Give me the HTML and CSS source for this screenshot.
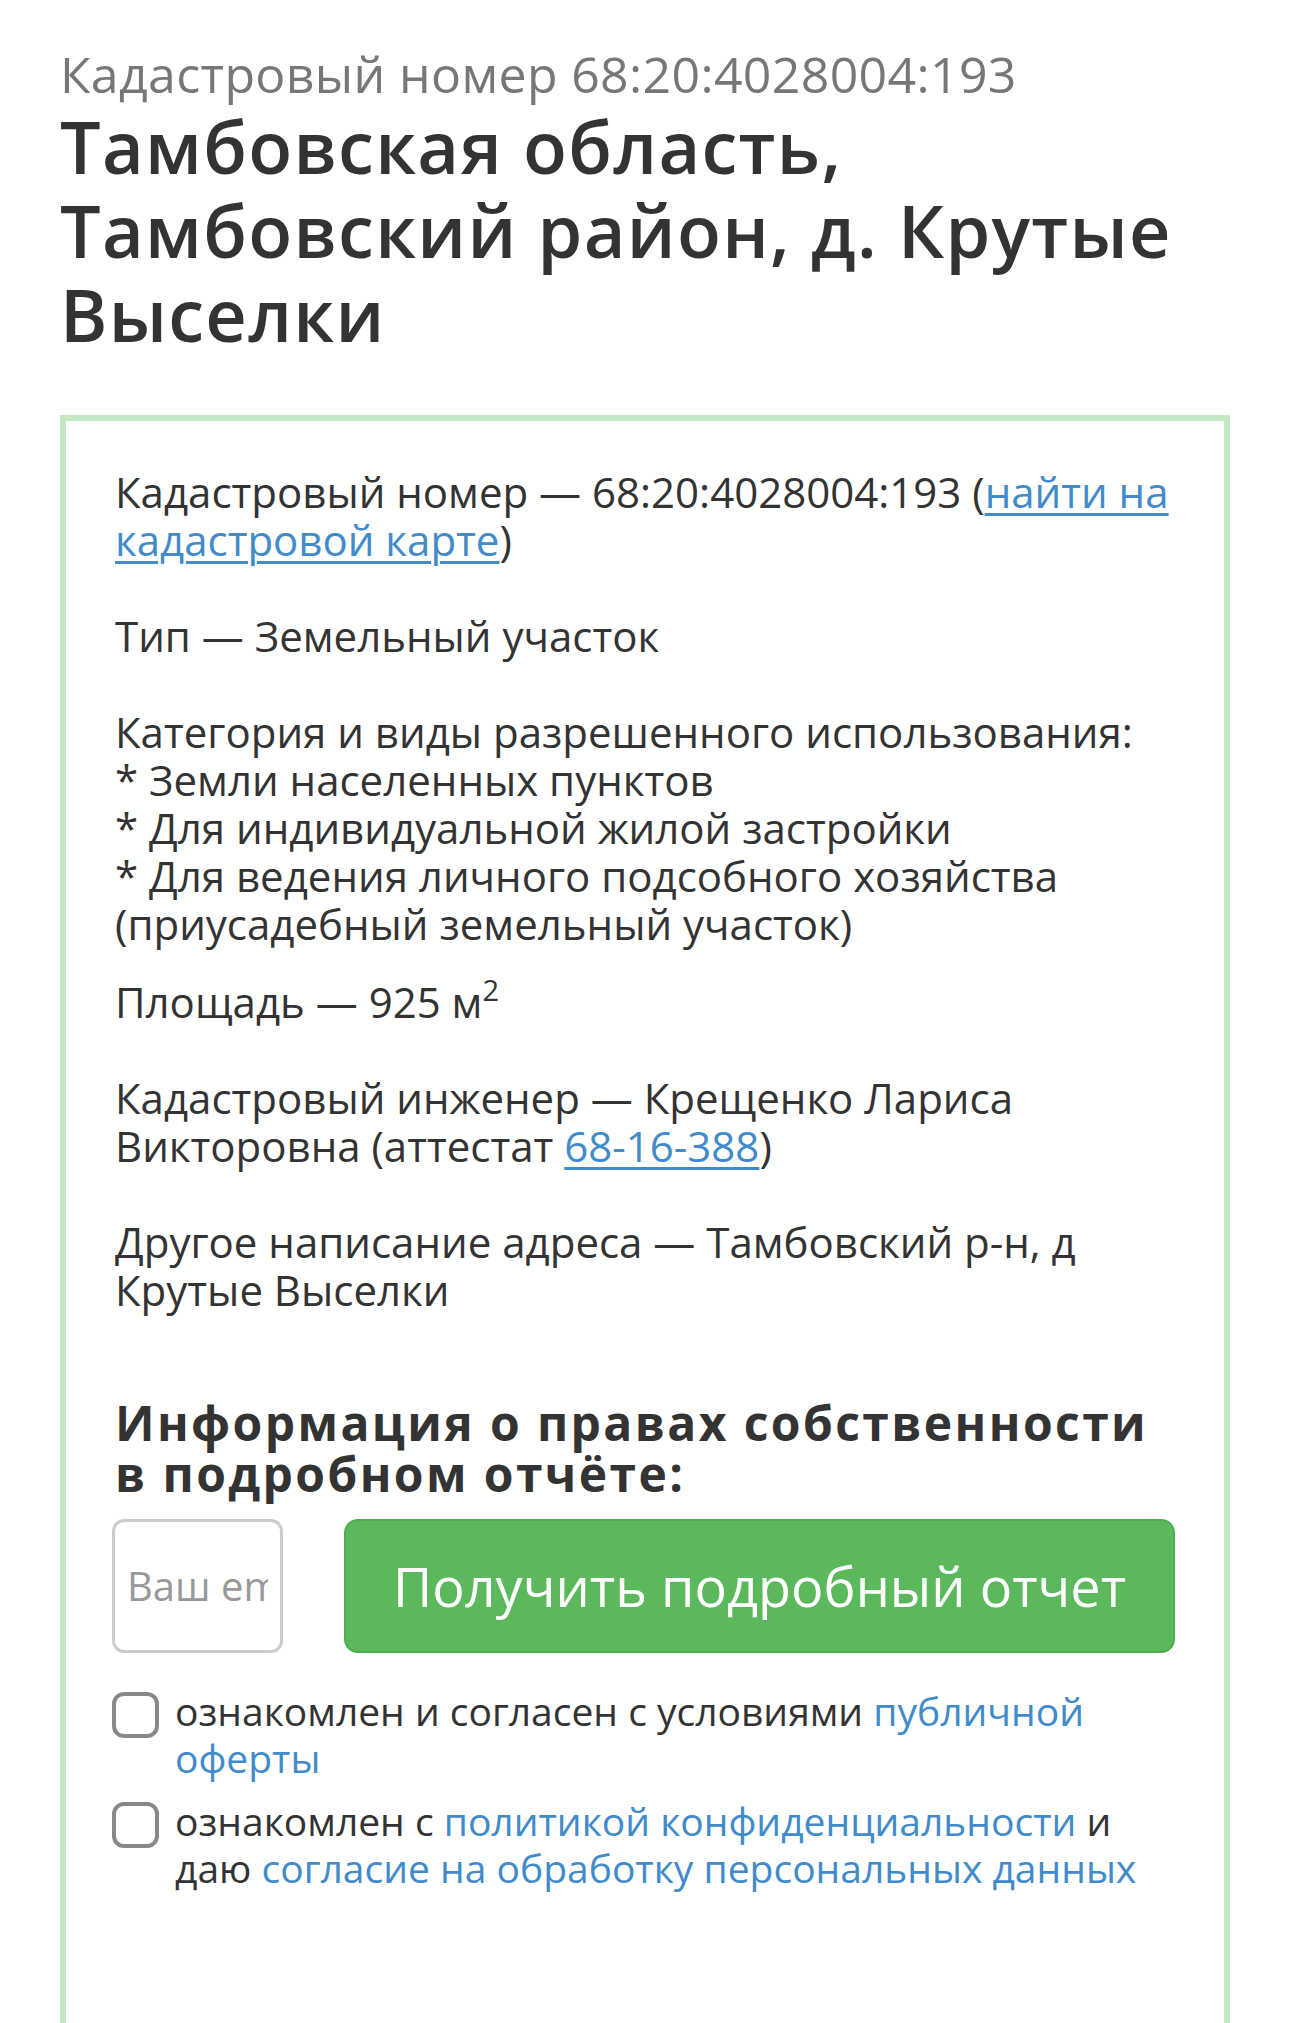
FILE: index.html
```html
<!DOCTYPE html>
<html lang="ru">
<head>
<meta charset="utf-8">
<title>Кадастровый номер 68:20:4028004:193</title>
<link rel="stylesheet" href="styles.css">
</head>
<body>
<div class="page">
  <div class="subtitle">Кадастровый номер 68:20:4028004:193</div>
  <h1 class="title">Тамбовская область, Тамбовский район, д. Крутые Выселки</h1>

  <div class="card">
    <p class="para">Кадастровый номер — 68:20:4028004:193 (<a class="ulink" href="#">найти на кадастровой карте</a>)</p>
    <p class="para">Тип — Земельный участок</p>
    <p class="para para-cat">Категория и виды разрешенного использования:<br>* Земли населенных пунктов<br>* Для индивидуальной жилой застройки<br>* Для ведения личного подсобного хозяйства (приусадебный земельный участок)</p>
    <p class="para">Площадь — 925 м<sup class="sup">2</sup></p>
    <p class="para">Кадастровый инженер — Крещенко Лариса Викторовна (аттестат <a class="ulink" href="#">68-16-388</a>)</p>
    <p class="para para-last">Другое написание адреса — Тамбовский р-н, д Крутые Выселки</p>

    <h2 class="heading">Информация о правах собственности в подробном отчёте:</h2>
    <form class="order">
      <input class="email" type="text" placeholder="Ваш email">
      <button class="submit" type="button">Получить подробный отчет</button>
    </form>
    <label class="check">
      <span class="box"></span>
      <span class="check-text">ознакомлен и согласен с условиями <a class="link" href="#">публичной оферты</a></span>
    </label>
    <label class="check">
      <span class="box"></span>
      <span class="check-text">ознакомлен с <a class="link" href="#">политикой конфиденциальности</a> и даю <a class="link" href="#">согласие на обработку персональных данных</a></span>
    </label>
  </div>
</div>
</body>
</html>
```

FILE: styles.css
```css
html, body {
  margin: 0;
  padding: 0;
  background: #ffffff;
}
body {
  font-family: "Open Sans", "Liberation Sans", sans-serif;
  color: #333333;
}
.page {
  padding: 46px 60px 0 60px;
}
.subtitle {
  font-size: 50px;
  line-height: 57.6px;
  letter-spacing: 0.35px;
  color: #777777;
  font-weight: 400;
}
.title {
  margin: 0;
  font-size: 72px;
  line-height: 84px;
  font-weight: 600;
  letter-spacing: 1.3px;
  color: #333333;
}
.card {
  margin-top: 59px;
  border: 6px solid #c3e8c6;
  border-bottom: none;
  padding: 47px 49px 200px 49px;
}
.para {
  margin: 0 0 48px 0;
  font-size: 42px;
  line-height: 48px;
}
.para-cat {
  margin-bottom: 30px;
}
.para-last {
  margin-bottom: 83px;
}
.sup {
  font-size: 29px;
  line-height: 0;
  vertical-align: 17px;
}
.ulink {
  color: #428bca;
  text-decoration: underline;
  text-underline-offset: 5px;
  text-decoration-thickness: 3px;
}
.link {
  color: #428bca;
  text-decoration: none;
}
.heading {
  margin: 0;
  font-size: 48px;
  line-height: 51px;
  font-weight: 700;
  letter-spacing: 2.4px;
}
.order {
  display: flex;
  gap: 61px;
  margin: 20px 0 34px -3px;
}
.email {
  box-sizing: border-box;
  width: 171px;
  height: 134px;
  border: 3px solid #cccccc;
  border-radius: 12px;
  padding: 0 12px;
  font-family: "Open Sans", "Liberation Sans", sans-serif;
  font-size: 40px;
  color: #555;
  background: #fff;
  outline: none;
}
.email::placeholder {
  color: #999999;
}
.submit {
  box-sizing: border-box;
  width: 834px;
  height: 134px;
  border: 2px solid #4cae4c;
  border-radius: 14px;
  background: #5cb85c;
  color: #ffffff;
  font-family: "Open Sans", "Liberation Sans", sans-serif;
  font-size: 54px;
  font-weight: 400;
  padding: 0;
}
.check {
  display: flex;
  align-items: flex-start;
  gap: 16px;
  margin: 0 0 16px -3px;
  font-size: 39px;
  line-height: 47px;
}
.box {
  flex: none;
  box-sizing: border-box;
  width: 47px;
  height: 46px;
  margin-top: 5px;
  border: 4px solid #888888;
  border-radius: 12px;
  background: #fff;
}
.check-text {
  flex: 1;
}
```
